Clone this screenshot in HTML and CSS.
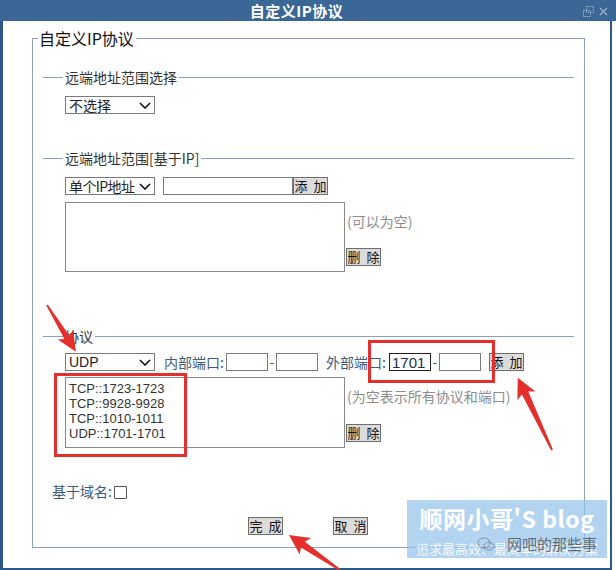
FILE: index.html
```html
<!DOCTYPE html>
<html lang="zh-CN">
<head>
    <meta charset="UTF-8">
    <meta name="viewport" content="width=device-width, initial-scale=1.0">
    <title>自定义IP协议</title>
    <link rel="stylesheet" href="styles.css">
</head>
<body>
    <div class="window">
        <!-- Title bar -->
        <div class="titlebar">
            <span class="title">自定义IP协议</span>
            <span class="win-icons">
                <svg width="11" height="11" viewBox="0 0 11 11">
                    <rect x="3.5" y="0.5" width="7" height="6" fill="none" stroke="#9fb3c8" stroke-dasharray="1.5 1"/>
                    <rect x="0.5" y="4.5" width="7" height="6" fill="none" stroke="#9fb3c8" stroke-dasharray="1.5 1"/>
                </svg>
                <svg width="9" height="9" viewBox="0 0 9 9">
                    <path d="M1 1 L8 8 M8 1 L1 8" stroke="#9fb3c8" stroke-width="1.2"/>
                </svg>
            </span>
        </div>

        <div class="window-body">
            <fieldset class="group">
                <legend>自定义IP协议</legend>

                <!-- Remote address range -->
                <fieldset class="section section-range">
                    <legend>远端地址范围选择</legend>
                    <div class="row">
                        <div class="select" role="combobox">
                            <span>不选择</span>
                            <svg width="12" height="7" viewBox="0 0 12 7"><path d="M1 1 L6 6 L11 1" fill="none" stroke="#111" stroke-width="1.6"/></svg>
                        </div>
                    </div>
                </fieldset>

                <!-- Remote address range by IP -->
                <fieldset class="section section-ip">
                    <legend>远端地址范围[基于IP]</legend>
                    <div class="row">
                        <div class="select narrow" role="combobox">
                            <span>单个IP地址</span>
                            <svg width="12" height="7" viewBox="0 0 12 7"><path d="M1 1 L6 6 L11 1" fill="none" stroke="#111" stroke-width="1.6"/></svg>
                        </div>
                        <input type="text" class="ip-input">
                        <button class="btn">添 加</button>
                    </div>
                    <div class="list-row">
                        <textarea class="list"></textarea>
                        <div class="list-side">
                            <span class="hint">(可以为空)</span>
                            <button class="btn">删 除</button>
                        </div>
                    </div>
                </fieldset>

                <!-- Protocol -->
                <fieldset class="section section-proto">
                    <legend>协议</legend>
                    <div class="row">
                        <div class="select latin" role="combobox">
                            <span>UDP</span>
                            <svg width="12" height="7" viewBox="0 0 12 7"><path d="M1 1 L6 6 L11 1" fill="none" stroke="#111" stroke-width="1.6"/></svg>
                        </div>
                        <span class="label label-in">内部端口:</span>
                        <input type="text" class="port">
                        <span class="dash">-</span>
                        <input type="text" class="port">
                        <span class="label label-out">外部端口:</span>
                        <input type="text" class="port port-active" value="1701">
                        <span class="dash">-</span>
                        <input type="text" class="port">
                        <button class="btn btn-add">添 加</button>
                    </div>
                    <div class="list-row">
                        <textarea class="list rules">TCP::1723-1723
TCP::9928-9928
TCP::1010-1011
UDP::1701-1701</textarea>
                        <div class="list-side">
                            <span class="hint">(为空表示所有协议和端口)</span>
                            <button class="btn">删 除</button>
                        </div>
                    </div>
                </fieldset>

                <div class="domain-row">
                    <span class="label">基于域名:</span>
                    <input type="checkbox" class="check">
                </div>

                <div class="actions">
                    <button class="btn">完 成</button>
                    <button class="btn">取 消</button>
                </div>
            </fieldset>
        </div>

        <!-- Red annotations drawn over the screenshot -->
        <svg class="annotations" width="616" height="570" viewBox="0 0 616 570">
            <rect x="55.5" y="374.5" width="130" height="81" fill="none" stroke="#e3302c" stroke-width="3"/>
            <rect x="369.5" y="341.5" width="124" height="40" fill="none" stroke="#e3302c" stroke-width="3"/>
            <polygon transform="translate(47 305) rotate(58.3)" points="0,-0.8 38,-3 35,-9 55,0 35,9 38,3 0,0.8" fill="#e3302c"/>
            <polygon transform="translate(552 450) rotate(-115.3)" points="0,-1 63,-3.5 60,-10 80,0 60,10 63,3.5 0,1" fill="#e3302c"/>
            <polygon transform="translate(340 570) rotate(-145.5)" points="0,-1 45,-3.5 42,-10 62,0 42,10 45,3.5 0,1" fill="#e3302c"/>
        </svg>

        <!-- Blog watermark -->
        <div class="watermark">
            <div class="wm-title">顺网小哥'S blog</div>
            <div class="wm-sub">追求最高效、最简单的解决方案</div>
            <div class="wm-stamp">
                <svg width="18" height="16" viewBox="0 0 18 16">
                    <ellipse cx="7" cy="7" rx="6" ry="5" fill="none" stroke="#666" stroke-dasharray="1.5 1"/>
                    <ellipse cx="12" cy="10" rx="5" ry="4" fill="none" stroke="#666" stroke-dasharray="1.5 1"/>
                </svg>
                <span>网吧的那些事</span>
            </div>
        </div>
    </div>
</body>
</html>
```

FILE: styles.css
```css
* {
    box-sizing: border-box;
}

body {
    margin: 0;
    background: #fff;
    font-family: "Noto Sans CJK SC", "Liberation Sans", sans-serif;
    color: #222;
}

.window {
    position: relative;
    width: 616px;
    height: 570px;
    overflow: hidden;
    background: #fff;
}

/* title bar */
.titlebar {
    height: 21px;
    background: #3b6796;
    display: grid;
    grid-template-columns: 1fr auto;
    align-items: center;
}

.title {
    text-align: center;
    padding-left: 10px;
    color: #fff;
    font-size: 15px;
    font-weight: bold;
    line-height: 21px;
    letter-spacing: 0.5px;
}

.win-icons {
    display: flex;
    align-items: center;
    gap: 5px;
    padding-right: 8px;
    padding-top: 1px;
}

.window-body {
    height: 549px;
    margin-right: 4px;
    padding-top: 8px;
    border-left: 3px solid #2d5885;
    border-right: 2px solid #2d5885;
    border-bottom: 2px solid #2d5885;
}

/* outer group */
.group {
    width: 553px;
    margin: 0 0 0 29px;
    padding: 0 0 12px 0;
    border: 1px solid #8aa2bc;
    min-width: 0;
}

.group > legend {
    margin-left: 5px;
    padding: 0 2px 0 1px;
    font-size: 16px;
    line-height: 18px;
    color: #111;
}

/* sections with a single top line */
.section {
    margin: 21px 10px 0 10px;
    padding: 0 0 0 22px;
    border: 0;
    border-top: 1px solid #8aa2bc;
    min-width: 0;
}

.section > legend {
    margin-left: -2px;
    padding: 0 2px;
    font-size: 14px;
    line-height: 18px;
    color: #333;
}

.section-ip {
    margin-top: 35px;
}

.section-proto {
    margin-top: 55px;
}

.row {
    display: flex;
    align-items: center;
    height: 18px;
}

.section-range .row {
    margin-top: 10px;
}

.section-ip .row {
    margin-top: 10px;
}

.section-proto .row {
    margin-top: 8px;
}

/* drop-down box */
.select {
    display: flex;
    align-items: center;
    justify-content: space-between;
    width: 90px;
    height: 18px;
    padding: 0 3px 0 3px;
    border: 1px solid #7a7a7a;
    background: #fff;
    font-size: 14px;
    line-height: 16px;
    color: #222;
    overflow: hidden;
    white-space: nowrap;
}

.select.narrow span {
    letter-spacing: -0.6px;
}

.select.latin {
    font-family: "Liberation Sans", sans-serif;
}

/* inputs */
input[type="text"] {
    height: 18px;
    margin: 0;
    padding: 0 2px;
    border: 1px solid #7a7a7a;
    border-radius: 0;
    background: #fff;
    font-family: "Liberation Sans", sans-serif;
    font-size: 14px;
    color: #1e2f48;
}

.ip-input {
    width: 130px;
    margin-left: 8px !important;
}

.port {
    width: 42px;
}

.port-active {
    border-color: #222 !important;
    font-size: 15px !important;
}

.label {
    font-size: 14px;
    line-height: 16px;
    color: #3f5b79;
    white-space: nowrap;
}

.label-in {
    width: 60px;
    margin-left: 9px;
    margin-right: 2px;
}

.label-out {
    width: 61px;
    margin-left: 8px;
    margin-right: 2px;
}

.dash {
    width: 8px;
    text-align: center;
    font-family: "Liberation Sans", sans-serif;
    font-size: 13px;
    color: #444;
}

/* buttons */
.btn {
    height: 18px;
    width: 35px;
    margin: 0;
    padding: 0;
    border: 1px solid #6e6e6e;
    border-radius: 0;
    background: #dcdcdc;
    font-family: "Noto Sans CJK SC", sans-serif;
    font-size: 13px;
    line-height: 16px;
    word-spacing: 3px;
    color: #111;
    cursor: pointer;
}

.btn-add {
    margin-left: 8px;
}

/* lists */
.list-row {
    display: flex;
    margin-top: 7px;
}

.section-proto .list-row {
    margin-top: 6px;
}

.list {
    width: 280px;
    height: 70px;
    margin: 0;
    padding: 3px 3px;
    border: 1px solid #8a8a8a;
    border-radius: 0;
    resize: none;
    overflow: hidden;
    font-family: "Liberation Sans", sans-serif;
    font-size: 13px;
    line-height: 15px;
    color: #333;
}

.rules {
    height: 71px;
}

.list-side {
    display: flex;
    flex-direction: column;
    justify-content: space-between;
    align-items: flex-start;
    padding: 11px 0 6px 1px;
}

.hint {
    padding-left: 1px;
    font-size: 14px;
    line-height: 16px;
    color: #8d8d8d;
    white-space: nowrap;
}

/* bottom rows */
.domain-row {
    display: flex;
    align-items: center;
    height: 16px;
    margin-top: 35px;
    padding-left: 19px;
}

.check {
    appearance: none;
    -webkit-appearance: none;
    width: 13px;
    height: 13px;
    margin: 2px 0 0 2px;
    border: 1px solid #555;
    border-radius: 1px;
    background: #fff;
}

.actions {
    display: flex;
    gap: 50px;
    margin-top: 18px;
    padding-left: 215px;
}

/* overlays */
.annotations {
    position: absolute;
    left: 0;
    top: 0;
    pointer-events: none;
}

.watermark {
    position: absolute;
    left: 407px;
    top: 500px;
    width: 200px;
    height: 58px;
    background: rgba(150, 196, 236, 0.72);
    text-align: center;
    color: #fff;
}

.wm-title {
    margin-top: 5px;
    font-size: 23px;
    font-weight: bold;
    line-height: 26px;
    letter-spacing: 0.5px;
}

.wm-sub {
    margin-top: 10px;
    font-size: 13px;
    line-height: 15px;
    color: rgba(255, 255, 255, 0.9);
    white-space: nowrap;
}

.wm-stamp {
    position: absolute;
    left: 70px;
    top: 36px;
    display: flex;
    align-items: center;
    gap: 12px;
    font-size: 15px;
    line-height: 16px;
    color: rgba(70, 70, 70, 0.75);
}
```
